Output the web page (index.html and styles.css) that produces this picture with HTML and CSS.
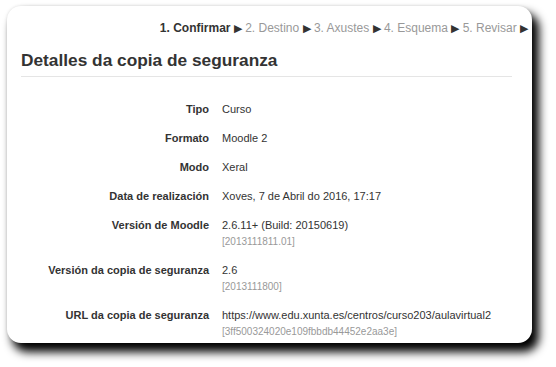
FILE: index.html
```html
<!DOCTYPE html>
<html lang="gl">
<head>
  <meta charset="UTF-8">
  <title>Detalles da copia de seguranza</title>
  <link rel="stylesheet" href="styles.css">
</head>
<body>

<div class="card">
  <div class="steps">
    <span class="current">1. Confirmar</span> <span class="arrow">&#9654;</span> 2. Destino <span class="arrow">&#9654;</span> 3. Axustes <span class="arrow">&#9654;</span> 4. Esquema <span class="arrow">&#9654;</span> 5. Revisar <span class="arrow">&#9654;</span>
  </div>
  <h2>Detalles da copia de seguranza</h2>

  <div class="details">
    <div class="label">Tipo</div>
    <div class="value">Curso</div>

    <div class="label">Formato</div>
    <div class="value">Moodle 2</div>

    <div class="label">Modo</div>
    <div class="value">Xeral</div>

    <div class="label">Data de realización</div>
    <div class="value">Xoves, 7 de Abril do 2016, 17:17</div>

    <div class="label">Versión de Moodle</div>
    <div class="value">2.6.11+ (Build: 20150619)<span class="sub">[2013111811.01]</span></div>

    <div class="label">Versión da copia de seguranza</div>
    <div class="value">2.6<span class="sub">[2013111800]</span></div>

    <div class="label">URL da copia de seguranza</div>
    <div class="value">https://www.edu.xunta.es/centros/curso203/aulavirtual2<span class="sub">[3ff500324020e109fbbdb44452e2aa3e]</span></div>
  </div>
</div>

</body>
</html>
```

FILE: styles.css
```css
body {
  margin: 0;
  min-height: 367px;
  background-color: #fff;
  font-family: "Liberation Sans", Arial, sans-serif;
  color: #333;
}
.card {
  box-sizing: border-box;
  width: 525px;
  height: 337px;
  margin: 6px 0 0 7px;
  padding-top: 14px;
  background-color: #fff;
  border-radius: 14px;
  box-shadow: 6px 8px 10px 1px #000, 0 0 3px rgba(0, 0, 0, 0.12);
}
.steps {
  text-align: right;
  padding-right: 4px;
  font-size: 12px;
  line-height: 16px;
  color: #999;
}
.steps .current {
  color: #333;
  font-weight: bold;
}
.steps .arrow {
  color: #333;
  font-size: 11px;
}
h2 {
  margin: 13px 20px 0 14px;
  padding: 0 0 5px 0;
  font-size: 17.3px;
  line-height: 22px;
  border-bottom: 1px solid #e5e5e5;
}
.details {
  display: grid;
  grid-template-columns: 202px 1fr;
  column-gap: 13px;
  margin-top: 18px;
  font-size: 11px;
  line-height: 17px;
}
.label {
  text-align: right;
  font-weight: bold;
  padding: 6px 0;
}
.value {
  padding: 6px 0;
}
.sub {
  display: block;
  font-size: 10px;
  line-height: 16px;
  color: #999;
}
```
